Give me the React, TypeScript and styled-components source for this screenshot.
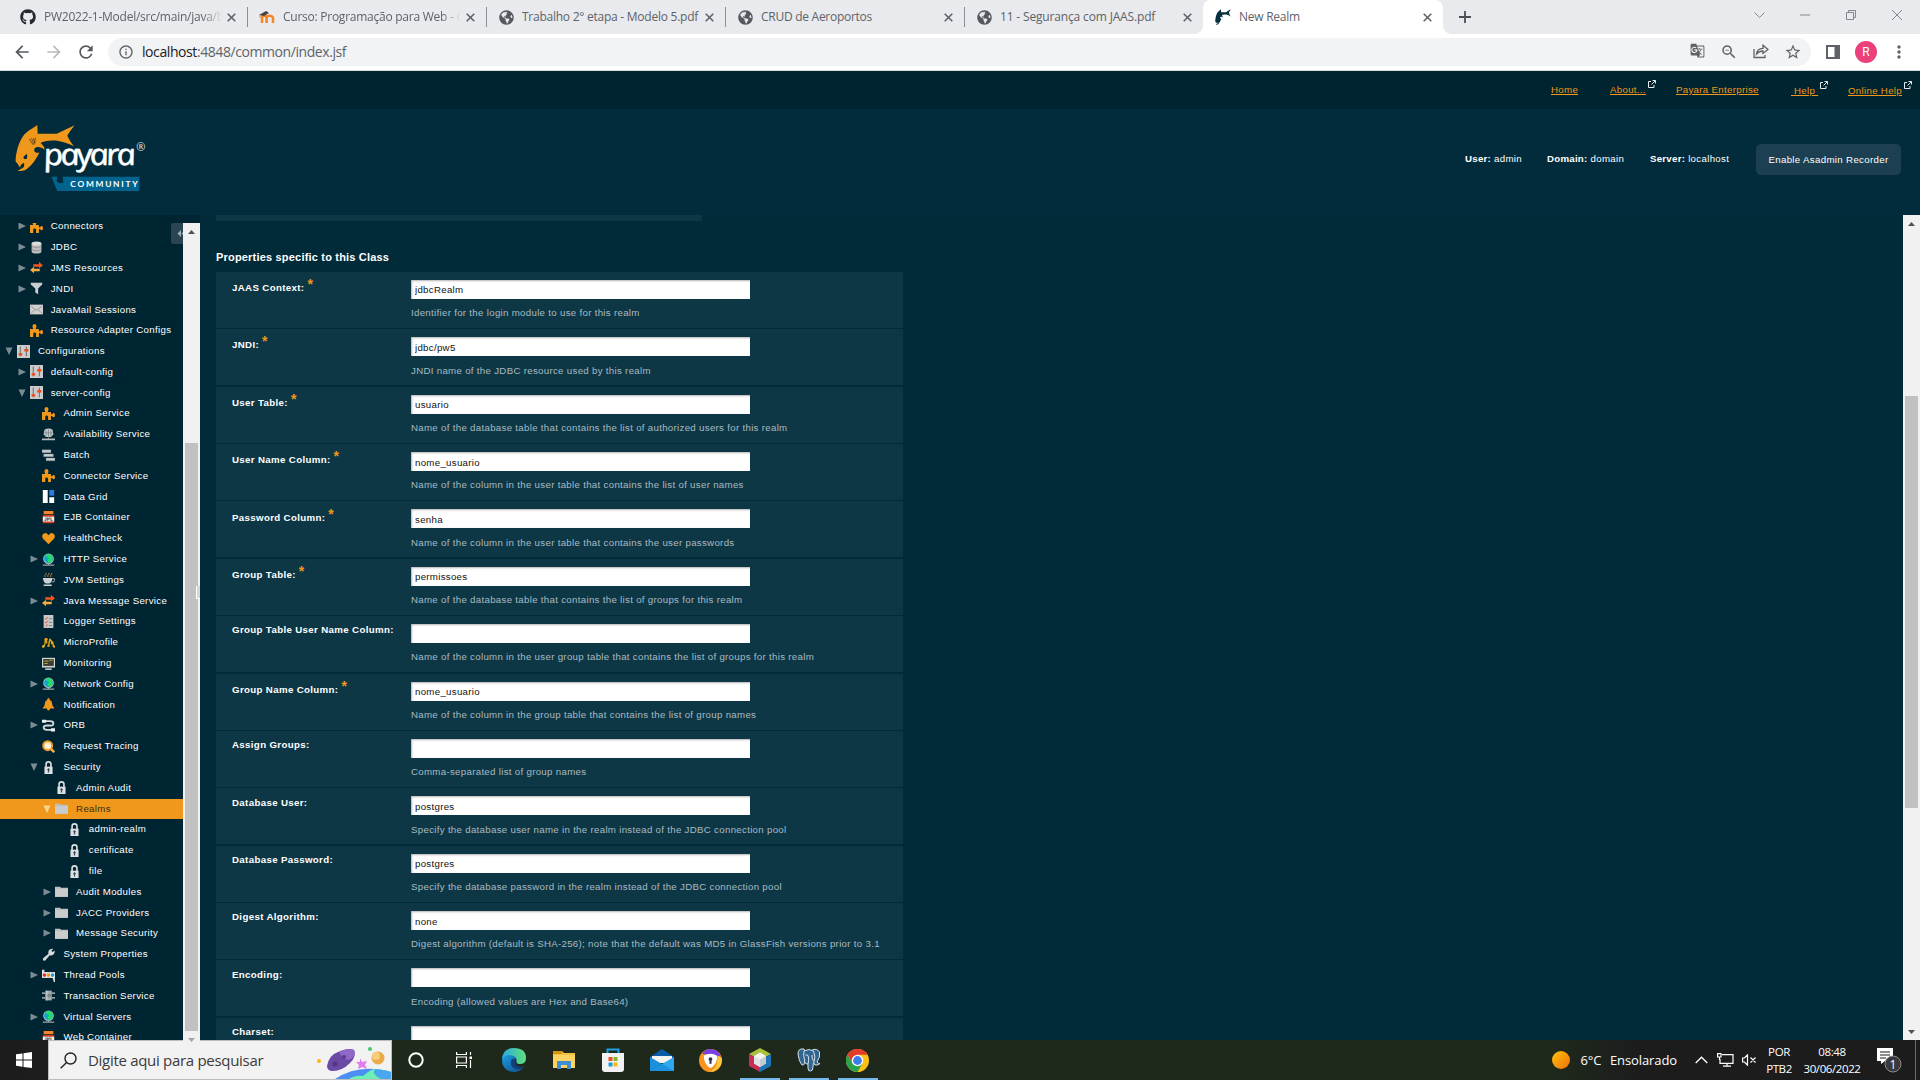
import React from "react";
import styled, { createGlobalStyle, css } from "styled-components";
import { FaGithub, FaGlobeAmericas } from "react-icons/fa";
import {
  MdArrowBack, MdArrowForward, MdRefresh, MdInfoOutline, MdGTranslate, MdStarBorder, MdMoreVert, MdOutlineZoomOut,
} from "react-icons/md";

const GlobalStyle = createGlobalStyle`
  * { box-sizing: border-box; }
  html, body { margin: 0; padding: 0; background: #022b3a; overflow: hidden; }
  svg { display: block; flex: none; }
`;

const UI = `"Open Sans", "Noto Sans", sans-serif`;
const PAGE = `"Liberation Sans", Arial, sans-serif`;

const Screen = styled.div`
  width: 1920px;
  height: 1080px;
  display: flex;
  flex-direction: column;
  overflow: hidden;
`;

/* ---------- browser chrome ---------- */
const TabStrip = styled.div`
  flex: none;
  height: 34px;
  background: #e8eaed;
  display: flex;
  padding-left: 8px;
  font: 12px/34px ${UI};
  color: #5f6368;
`;
const Tab = styled.div<{ $active?: boolean; $line?: boolean; $tight: number }>`
  position: relative;
  width: ${(p) => (p.$active ? 240 : 239)}px;
  height: 34px;
  padding: 0 9px 0 12px;
  display: flex;
  align-items: center;
  letter-spacing: ${(p) => p.$tight}px;
  ${(p) => p.$line && css`
    &::after { content: ""; position: absolute; right: -1px; top: 7px; width: 1px; height: 20px; background: #8b8e93; }
  `}
  ${(p) => p.$active && css`
    background: #fff;
    border-radius: 8px 8px 0 0;
    &::before, &::after { content: ""; position: absolute; bottom: 0; width: 8px; height: 8px; }
    &::before { left: -8px; background: radial-gradient(circle at 0 0, #e8eaed 7.5px, #fff 8px); }
    &::after { right: -8px; background: radial-gradient(circle at 100% 0, #e8eaed 7.5px, #fff 8px); }
  `}
`;
const TabIcon = styled.span`
  width: 16px;
  display: grid;
  place-items: center;
`;
const TabTitle = styled.span<{ $fade?: boolean }>`
  flex: 1;
  margin-left: 8px;
  overflow: hidden;
  white-space: nowrap;
  ${(p) => p.$fade && css`mask-image: linear-gradient(90deg, #000 158px, transparent 178px);`}
`;
const TabClose = styled.span`
  width: 14px;
  height: 14px;
  display: grid;
  place-items: center;
  margin-left: 1px;
`;
const NewTab = styled.div`
  width: 44px;
  display: grid;
  place-items: center;
`;
const WindowButtons = styled.div`
  margin-left: auto;
  display: grid;
  grid-template-columns: repeat(4, 46px);
  height: 29px;
  align-items: center;
  justify-items: center;
`;
const Toolbar = styled.div`
  flex: none;
  height: 37px;
  background: #fff;
  border-bottom: 1px solid #d5dbdc;
  display: flex;
  align-items: center;
  padding: 0 10px 0 12px;
  color: #5f6368;
`;
const NavButton = styled.span<{ $dim?: boolean; $gap?: number }>`
  color: ${(p) => (p.$dim ? "#b9bbbe" : "#55595d")};
  margin-right: ${(p) => p.$gap ?? 12}px;
`;
const Omnibox = styled.div`
  flex: 1;
  height: 28px;
  border-radius: 14px;
  background: #f1f3f4;
  display: flex;
  align-items: center;
  padding: 0 9px 0 10px;
  font: 14px/28px ${UI};
  letter-spacing: -0.42px;
  color: #5f6368;
`;
const Url = styled.span`
  flex: 1;
  margin-left: 8px;
  b { font-weight: 400; color: #202124; }
`;
const BoxIcons = styled.div`
  display: grid;
  grid-template-columns: repeat(4, 32px);
  justify-items: center;
  margin-right: -7px;
`;
const ToolIcons = styled.div`
  display: grid;
  grid-template-columns: 44px 22px 44px;
  justify-items: center;
  align-items: center;
  margin-right: -11px;
`;
const Avatar = styled.span`
  width: 22px;
  height: 22px;
  border-radius: 50%;
  background: #ec407a;
  color: #fff;
  font: 12px/22px Roboto, ${UI};
  text-align: center;
`;

/* ---------- admin console header ---------- */
const LinkBar = styled.div`
  flex: none;
  height: 38px;
  background: #002430;
  display: grid;
  grid-template-columns: 59px 66px 115px 57px 72px;
  justify-content: end;
  align-items: center;
  font: 9.7px/12px ${PAGE};
`;
const TopLink = styled.div<{ $low?: boolean }>`
  display: flex;
  align-items: center;
  gap: 2px;
  margin-top: ${(p) => (p.$low ? 2 : 0)}px;
  white-space: pre;
  color: #f0981b;
  letter-spacing: 0.31px;
  span { text-decoration: underline; }
  svg { margin-bottom: 12px; }
`;
const Masthead = styled.header`
  flex: none;
  height: 106px;
  background: #022c3c;
  display: grid;
  grid-template-columns: 1465px 82px 103px 106px 145px;
  align-items: center;
  font: 9.7px/12px ${PAGE};
  letter-spacing: 0.31px;
  color: #fff;
  svg { margin-top: -4px; }
`;
const Info = styled.div`
  margin-top: -6px;
  white-space: nowrap;
  b { letter-spacing: 0.25px; }
`;
const RecorderButton = styled.button`
  height: 31px;
  margin-top: -5px;
  padding: 0;
  border: 0;
  border-radius: 5px;
  background: #1c4051;
  color: #fff;
  font: 9.7px/12px ${PAGE};
  letter-spacing: 0.33px;
`;

/* ---------- body: tree and form ---------- */
const Body = styled.div`
  flex: none;
  height: 825px;
  display: flex;
  background: #022b3a;
`;
const Sidebar = styled.nav`
  width: 200px;
  padding-top: 8px;
  background: #002532;
  display: grid;
  grid-template-columns: 183px 17px;
  position: relative;
`;
const Tree = styled.div`
  height: 817px;
  overflow: hidden;
  font: 9.7px/19px ${PAGE};
  letter-spacing: 0.315px;
  color: #fff;
`;
const TreeBody = styled.div`
  margin-top: -6.7px;
`;
const TreeRow = styled.div<{ $depth: number; $selected?: boolean }>`
  height: 20.8px;
  padding-left: ${(p) => 5 + p.$depth * 12.7}px;
  display: flex;
  align-items: flex-start;
  white-space: nowrap;
  color: ${(p) => (p.$selected ? "#3b2f14" : "#fff")};
  background: ${(p) => (p.$selected ? "linear-gradient(#f0981b 20px, transparent 20px)" : "none")};
`;
const Twisty = styled.span<{ $selected?: boolean }>`
  width: 8px;
  height: 20px;
  margin-right: 4px;
  display: grid;
  align-items: center;
  color: ${(p) => (p.$selected ? "#fbd58c" : "#7b8b92")};
`;
const IconCell = styled.span`
  width: 13px;
  height: 20px;
  margin-right: 8px;
  display: grid;
  place-items: center;
`;
const Collapse = styled.div`
  position: absolute;
  left: 171px;
  top: 8px;
  width: 12px;
  height: 21px;
  overflow: hidden;
  border-radius: 2px 0 0 2px;
  background: #2a4551;
  display: grid;
  align-items: center;
  padding-left: 6px;
`;
const Splitter = styled.div`
  position: absolute;
  left: 196px;
  top: 371px;
  width: 4px;
  height: 13px;
  background: #d8d8d8;
  border-left: 1px solid #fff;
  border-bottom: 1px solid #fff;
`;
const ScrollTrack = styled.div<{ $before: number; $thumb: number }>`
  width: 17px;
  background: #f1f1f1;
  display: grid;
  grid-template-rows: 17px ${(p) => p.$before}px ${(p) => p.$thumb}px 1fr 17px;
  justify-items: center;
  align-items: center;
  i { grid-row: 3; width: 13px; height: 100%; background: #c1c1c1; }
  svg:last-child { grid-row: 5; }
`;
const Main = styled.main`
  flex: 1;
  height: 825px;
  overflow: hidden;
  padding-left: 16px;
  font-family: ${PAGE};
`;
const TopStrip = styled.div`
  width: 486px;
  height: 6px;
  background: #0e3746;
`;
const SectionTitle = styled.h2`
  height: 51px;
  margin: 0;
  padding-top: 29px;
  font: bold 11px/14px ${PAGE};
  letter-spacing: 0.19px;
  color: #fff;
`;
const FormTable = styled.div`
  width: 687px;
  margin-top: -0.05px;
  display: grid;
  grid-auto-rows: 56px;
  row-gap: 1.38px;
`;
const FormRow = styled.div`
  background: #0e3746;
  display: grid;
  grid-template-columns: 179px 339px;
  padding: 8px 0 0 16px;
`;
const Label = styled.label<{ $required?: boolean }>`
  padding-top: ${(p) => (p.$required ? 2.1 : 0.2)}px;
  font: bold 9.7px/12px ${PAGE};
  letter-spacing: 0.35px;
  color: #fff;
  display: flex;
  white-space: nowrap;
`;
const Star = styled.span`
  margin: -5px 0 0 3px;
  font: bold 14px/14px ${PAGE};
  color: #f0981b;
`;
const Field = styled.div`
  white-space: nowrap;
`;
const TextInput = styled.input`
  display: block;
  width: 339px;
  height: 19px;
  padding: 1px 4px 0;
  border: 0;
  background: #fff;
  box-shadow: inset 1px 1px 2px rgba(0, 0, 0, 0.3);
  font: 9.7px/14px ${PAGE};
  letter-spacing: 0.29px;
  color: #111;
`;
const Help = styled.div`
  margin-top: 8.2px;
  font: 9.7px/12px ${PAGE};
  letter-spacing: 0.302px;
  color: #a9bac1;
`;

/* ---------- taskbar ---------- */
const Taskbar = styled.div`
  flex: none;
  height: 40px;
  display: flex;
  background: linear-gradient(90deg, #1c1c1c 0, #1e281b 392px, #1e281b 1560px, #1c1c1d 1640px);
  color: #fff;
  font-family: ${UI};
`;
const StartButton = styled.div`
  width: 48px;
  display: grid;
  place-items: center;
`;
const SearchBox = styled.div`
  width: 344px;
  height: 40px;
  border: 1px solid #bdbdbd;
  background: #f2f2f2;
  display: flex;
  align-items: center;
  padding-left: 11px;
  color: #3a3a3a;
  font: 15px/36px ${UI};
  letter-spacing: -0.3px;
  span { flex: 1; margin-left: 11px; white-space: nowrap; }
`;
const AppButtons = styled.div`
  display: grid;
  grid-template-columns: 48px 48px 52px 48px repeat(6, 49px);
`;
const AppButton = styled.div<{ $open?: boolean }>`
  height: 40px;
  display: grid;
  place-items: center;
  background: ${(p) => (p.$open ? "linear-gradient(#76b9ed, #76b9ed) 50% 100% / 40px 2px no-repeat" : "none")};
`;
const Tray = styled.div`
  margin-left: auto;
  display: grid;
  grid-template-columns: 18px 29.5px 90px 24px 24px 24px 36px 70px 48px 5px;
  align-items: center;
  justify-items: center;
`;
const Weather = styled.span`
  justify-self: start;
  padding-left: 11px;
  font: 13px/16px ${UI};
  letter-spacing: -0.1px;
  white-space: nowrap;
`;
const Stacked = styled.span`
  margin-top: -1px;
  font: 11.5px/17px ${UI};
  letter-spacing: -0.4px;
  text-align: center;
  white-space: nowrap;
`;
const Notifications = styled.span`
  margin-right: 3px;
`;
const ShowDesktop = styled.span`
  height: 40px;
  width: 5px;
  border-left: 1px solid #6d6d6d;
`;

/* ---------- drawings ---------- */
const FISH = "M47 132C48 115 54 85 70 62C84 46 99 40 112 30L113 56L170 56C190 48 208 38 224 31C214 44 206 54 202 62C206 72 214 84 222 94C208 86 190 80 172 77C148 75 128 80 122 84C130 92 133 96 134 104C122 94 108 94 103 102C101 112 110 115 118 113C108 132 96 152 75 166C65 168 58 168 53 167C60 164 66 160 71 157C73 152 73 146 72 143L63 149L60 157C56 154 54 144 47 140Z";

const Logo = () => (
  <svg width="160" height="90" viewBox="0 0 480 270">
    <path d={FISH} fill="#f0981b" />
    <path d="M80 116L70 126L72 132L80 132L82 124Z" fill="#022c3c" />
    <path d="M88 72L100 90M94 70L103 88M100 70L105 84M106 68L104 86" stroke="#6d4f21" strokeWidth="3" />
    <g transform="translate(136 149) skewX(12) scale(1.14 1)">
      <text fill="#fff" stroke="#fff" strokeWidth="1.5" fontFamily="Open Sans, sans-serif" fontStyle="italic" fontSize="90" textLength="243">payara</text>
    </g>
    <text x="409" y="107" fill="#dfe6e9" fontFamily="Open Sans, sans-serif" fontSize="33">®</text>
    <path d="M154 185H172L170 199L178 205L190 203L188 185H418V228H172Z" fill="#02638f" />
    <text x="211" y="215" fill="#fff" fontFamily="Lato, sans-serif" fontWeight="700" fontSize="25" textLength="202">COMMUNITY</text>
  </svg>
);
const FishFavicon = () => (
  <svg width="16" height="16" viewBox="44 28 182 142" preserveAspectRatio="none"><path d={FISH} fill="#06303f" /></svg>
);
const Moodle = () => (
  <svg width="16" height="16" viewBox="0 0 16 16">
    <path d="M3 14V9q0-2.2 2.2-2.2T7.5 9v5M7.700 14V9q0-2.200 2.800-2.200T14 9v5" fill="none" stroke="#f7862b" strokeWidth="2.500" />
    <path d="M0 6L7 2L10 4L5 7Z" fill="#444" /><path d="M1 6V9" stroke="#f7862b" />
  </svg>
);
const Cross = () => (
  <svg width="9" height="9" viewBox="0 0 9 9"><path d="M.7.7L8.300 8.300M8.300.7L.7 8.300" stroke="#5f6368" strokeWidth="1.600" /></svg>
);
const External = () => (
  <svg width="8" height="8" viewBox="0 0 8 8" fill="none" stroke="#e6ecee" strokeWidth="1">
    <path d="M3 1.500H.500V7.500H6V5M4.500.500H7.500V3.500M7.300.700L3.500 4.500" />
  </svg>
);
const Triangle = ({ down, color = "#505050" }: { down?: boolean; color?: string }) => (
  <svg width="7" height="4" viewBox="0 0 7 4"><path d={down ? "M0 0H7L3.500 4Z" : "M0 4H7L3.500 0Z"} fill={color} /></svg>
);
const TwistyMark = ({ open }: { open: boolean }) => (
  <svg width="8" height="8" viewBox="0 0 8 8"><path d={open ? "M.5.5H7.500L4 8Z" : "M.5.5L8 4L.5 7.500Z"} fill="currentColor" /></svg>
);

type Kind = "puzzle" | "db" | "arrows" | "funnel" | "mail" | "config" | "cluster" | "batch" | "grid" | "jar" | "heart" | "globe"
  | "cup" | "list" | "micro" | "monitor" | "bell" | "orb" | "lens" | "lock" | "folder" | "wrench" | "pool" | "tx";

const SHAPES: Record<Kind, React.ReactNode> = {
  puzzle: <path d="M0 6H4Q3 4 3 2.500Q3.500 0 5.500 0T8 2.500Q8 4 7 6H11V9H12.500Q13 7.500 14.500 7.500T16 10T14.500 12.500Q13 12.500 12.500 11H11V16H7.500V12Q7 10.500 5.500 10.500T4 12V16H0Z" fill="#f0981b" />,
  db: <><path d="M2 3V13Q2 15.500 8 15.500T14 13V3Z" fill="#bdbdbd" /><ellipse cx="8" cy="3" rx="6" ry="2.500" fill="#dcdcdc" /><path d="M2 6Q3 8 8 8T14 6M2 10Q3 12 8 12T14 10" fill="none" stroke="#8f8f8f" /></>,
  arrows: <><path d="M4 4H11V1L16 5.500L11 9V7H4Z" fill="#f2561d" /><path d="M12 9.500H5V7L0 11L5 15V12.500H12Z" fill="#f5ab3d" /></>,
  funnel: <path d="M1 1H15V3L10 8V15L6.500 13V8L1 3Z" fill="#c9cdd0" />,
  mail: <><path d="M0 2H16V14H0Z" fill="#cfcfcf" /><path d="M1 4L8 9L15 4M1 13L6 8M15 13L10 8" fill="none" stroke="#8c8c8c" /></>,
  config: <><path d="M0 0H16V16H0Z" fill="#cbcbcb" /><path d="M4 2V14M11.500 2V14" stroke="#555" /><path d="M2 10H6.500V13H2ZM9 5H14V8H9Z" fill="#f04a17" /></>,
  cluster: <><path d="M3 2Q8-1 13 2L14 8L11 11H5L2 8Z" fill="#c4c8ca" /><path d="M5 3V10M8 2V14M11 3V10M3 6H13" stroke="#7d868b" /><path d="M0 14H6M10 14H16M6 14H10" stroke="#b5babd" strokeWidth="2" /></>,
  batch: <path d="M0 1H11V4.500H0ZM2 6H14V9.500H2ZM5 11H16V14.500H5Z" fill="#c9cdcf" stroke="#6f787c" strokeWidth=".4" />,
  grid: <><path d="M1 0H7V16H1ZM9 9H15V16H9Z" fill="#fff" /><path d="M9 0H15V7H9Z" fill="#2c7be5" /></>,
  jar: <><path d="M2 0H14V4H2Z" fill="#f5832a" /><path d="M1 5H15V15H1Z" fill="#d93a1b" /><path d="M1 7H15V13H1Z" fill="#eee" /><path d="M3 11.500H5V8M7 8V12M7 10H9V8M11 8V12H13" fill="none" stroke="#333" /></>,
  heart: <path d="M8 15L1 8Q-1 4 2 2T8 4Q11 0 14 2T15 8Z" fill="#f0981b" />,
  globe: <><circle cx="8" cy="7" r="6.500" fill="#b7c5ca" /><circle cx="8" cy="7" r="5.500" fill="#16a5c9" /><path d="M5 2Q9 0 12 4Q14.500 8 11 11L8 12L7 9L9 6L6 5Z" fill="#1fe25b" /><path d="M1 15H15M8 13V15" stroke="#9aa5aa" strokeWidth="1.600" /></>,
  cup: <><path d="M4 5Q2.500 3.500 4.500 2T4 0M7.500 5Q6 3.500 8 2T7.500 0M11 5Q9.500 3.500 11.500 2T11 0" fill="none" stroke="#c6813a" strokeWidth="1.200" /><path d="M1 6H13Q12 12 9 13H5Q2 12 1 6ZM2 14H12V16H2Z" fill="#cdd1d3" /><path d="M13 7Q16 6 15.500 9T12 11" fill="none" stroke="#cdd1d3" /></>,
  list: <><path d="M2 0H14V16H2Z" fill="#c9c9c9" /><path d="M4 4L5 5.500L7 2.500M4 8.500L5 10L7 7M4 13L5 14L7 11.500" fill="none" stroke="#e24a24" /><path d="M8.500 4.500H12.500M8.500 9H12.500M8.500 13H12.500" stroke="#777" /></>,
  micro: <><path d="M1 13Q4 13 4 5Q5 3 6 9M8 13Q9 5 10 4Q12 6 12 10Q13 3 14 13" fill="none" stroke="#e2a516" strokeWidth="1.800" /><circle cx="1.500" cy="13" r="1.500" fill="#f0c21b" /><circle cx="5" cy="4" r="2" fill="#f0981b" /><circle cx="8" cy="12" r="1.500" fill="#c99414" /><circle cx="15" cy="13" r="1.500" fill="#f0981b" /></>,
  monitor: <><path d="M0 1H16V13H0Z" fill="#d3d3d3" /><path d="M1.500 2.500H14.500V11H1.500Z" fill="#3b3d33" /><path d="M3 5H8M9 4H13M3 8H7" stroke="#d1c53b" /><path d="M4 15H12" stroke="#c0c0c0" strokeWidth="2" /></>,
  bell: <path d="M8 0Q9.500 0 9.500 2Q12.500 3 12.500 7Q12.500 10 15 12V13H10Q10 15.500 8 15.500T6 13H1V12Q3.500 10 3.500 7Q3.500 3 6.500 2Q6.500 0 8 0Z" fill="#f0981b" />,
  orb: <><path d="M1 2.500H10Q14 2.500 14 5.500T10 8H6Q2 8 2 10.500T6 13.500H15" fill="none" stroke="#d5dadc" strokeWidth="2.200" /><path d="M0 1H5V4.500H0ZM11 11.500H16V15.500H11Z" fill="#eee" /></>,
  lens: <><circle cx="7" cy="7" r="5.500" fill="#fff2d8" stroke="#f0981b" strokeWidth="2.500" /><path d="M11 11L15 15" stroke="#f5b050" strokeWidth="3" /></>,
  lock: <><path d="M5 8V4Q5 1 8 1T11 4V8" fill="none" stroke="#dde0e2" strokeWidth="2" /><path d="M3 7H13V16H3Z" fill="#dde0e2" /><path d="M8 9V14M6.500 10.500H9.500" stroke="#3b4a50" strokeWidth="1.500" /></>,
  folder: <><path d="M0 2H6L7.500 3.500H16V14.500H0Z" fill="#bcbfc0" /><path d="M0 5H16V14.500H0Z" fill="#cacccc" /></>,
  wrench: <path d="M1 13L8 7Q7 3 10 1.500Q12 .5 14 1L11.500 3.500L13 5L15.500 3Q16 6 14 8T9.500 9L4 15.500Q1 16.500 1 13Z" fill="#d6dadb" />,
  pool: <><path d="M0 1H3V4H16V11H13V8H0Z" fill="#d8dcdd" /><path d="M0 4H16V11H0Z" fill="#e6e8e8" /><path d="M13 11H16V16H14.500Z" fill="#d8dcdd" /><circle cx="3" cy="7.500" r="2.200" fill="#e8321d" /><circle cx="8" cy="7.500" r="2.200" fill="#f0981b" /><circle cx="13" cy="7.500" r="2.200" fill="#1f9edb" /></>,
  tx: <><path d="M4 2H12V14H4Z" fill="#a6acae" /><path d="M0 5H4M0 11H4M12 5H16M12 11H16M6 2V14" stroke="#c6cbcd" strokeWidth="1.500" /><circle cx="9" cy="8" r="2.500" fill="#80888b" /></>,
};
const TreeIcon = ({ kind }: { kind: Kind }) => <svg width="13" height="13" viewBox="0 0 16 16">{SHAPES[kind]}</svg>;

/* depth, expander (">" closed, "v" open, "" leaf), icon, label */
const NODES: [number, string, Kind, string][] = [
  [1, ">", "puzzle", "Connectors"], [1, ">", "db", "JDBC"], [1, ">", "arrows", "JMS Resources"], [1, ">", "funnel", "JNDI"],
  [1, "", "mail", "JavaMail Sessions"], [1, "", "puzzle", "Resource Adapter Configs"], [0, "v", "config", "Configurations"],
  [1, ">", "config", "default-config"], [1, "v", "config", "server-config"], [2, "", "puzzle", "Admin Service"],
  [2, "", "cluster", "Availability Service"], [2, "", "batch", "Batch"], [2, "", "puzzle", "Connector Service"],
  [2, "", "grid", "Data Grid"], [2, "", "jar", "EJB Container"], [2, "", "heart", "HealthCheck"], [2, ">", "globe", "HTTP Service"],
  [2, "", "cup", "JVM Settings"], [2, ">", "arrows", "Java Message Service"], [2, "", "list", "Logger Settings"],
  [2, "", "micro", "MicroProfile"], [2, "", "monitor", "Monitoring"], [2, ">", "globe", "Network Config"],
  [2, "", "bell", "Notification"], [2, ">", "orb", "ORB"], [2, "", "lens", "Request Tracing"], [2, "v", "lock", "Security"],
  [3, "", "lock", "Admin Audit"], [3, "v", "folder", "Realms"], [4, "", "lock", "admin-realm"], [4, "", "lock", "certificate"],
  [4, "", "lock", "file"], [3, ">", "folder", "Audit Modules"], [3, ">", "folder", "JACC Providers"],
  [3, ">", "folder", "Message Security"], [2, "", "wrench", "System Properties"], [2, ">", "pool", "Thread Pools"],
  [2, "", "tx", "Transaction Service"], [2, ">", "globe", "Virtual Servers"], [2, "", "jar", "Web Container"],
];

/* label, required, value, help */
const FIELDS: [string, boolean, string, string][] = [
  ["JAAS Context:", true, "jdbcRealm", "Identifier for the login module to use for this realm"],
  ["JNDI:", true, "jdbc/pw5", "JNDI name of the JDBC resource used by this realm"],
  ["User Table:", true, "usuario", "Name of the database table that contains the list of authorized users for this realm"],
  ["User Name Column:", true, "nome_usuario", "Name of the column in the user table that contains the list of user names"],
  ["Password Column:", true, "senha", "Name of the column in the user table that contains the user passwords"],
  ["Group Table:", true, "permissoes", "Name of the database table that contains the list of groups for this realm"],
  ["Group Table User Name Column:", false, "", "Name of the column in the user group table that contains the list of groups for this realm"],
  ["Group Name Column:", true, "nome_usuario", "Name of the column in the group table that contains the list of group names"],
  ["Assign Groups:", false, "", "Comma-separated list of group names"],
  ["Database User:", false, "postgres", "Specify the database user name in the realm instead of the JDBC connection pool"],
  ["Database Password:", false, "postgres", "Specify the database password in the realm instead of the JDBC connection pool"],
  ["Digest Algorithm:", false, "none", "Digest algorithm (default is SHA-256); note that the default was MD5 in GlassFish versions prior to 3.1"],
  ["Encoding:", false, "", "Encoding (allowed values are Hex and Base64)"],
  ["Charset:", false, "", ""],
];

const GlobeIcon = () => <FaGlobeAmericas size={15} color="#55595d" />;
const TABS: { icon: React.ReactNode; title: string; tight: number; fade?: boolean; line?: boolean; active?: boolean }[] = [
  { icon: <FaGithub size={16} color="#24292e" />, title: "PW2022-1-Model/src/main/java/b", tight: -0.25, fade: true, line: true },
  { icon: <Moodle />, title: "Curso: Programação para Web - G", tight: -0.25, fade: true, line: true },
  { icon: <GlobeIcon />, title: "Trabalho 2° etapa - Modelo 5.pdf", tight: -0.25, line: true },
  { icon: <GlobeIcon />, title: "CRUD de Aeroportos", tight: -0.27, line: true },
  { icon: <GlobeIcon />, title: "11 - Segurança com JAAS.pdf", tight: -0.16 },
  { icon: <FishFavicon />, title: "New Realm", tight: -0.25, active: true },
];

const SearchArt = () => (
  <svg width="76" height="38" viewBox="0 0 76 38">
    <circle cx="4" cy="20" r="2" fill="#fcb813" />
    <path d="M12 25Q14 14 23 11Q34 6 39 9Q42 15 35 22Q27 30 18 30Q12 30 12 25Z" fill="#6b4aa5" />
    <path d="M24 11Q34 6 39 9Q41 14 36 18Q29 21 24 11Z" fill="#8f68c8" />
    <circle cx="20" cy="23" r="2.500" fill="#513587" /><circle cx="29" cy="16" r="2" fill="#573a8f" />
    <path d="M45 17L47 21L52 20L50 24L52 28L47 26L43 28L44 24L41 21L45 21Z" fill="#e17cf0" />
    <circle cx="55" cy="8" r="2" fill="#46c96c" />
    <circle cx="63" cy="17" r="6.500" fill="#eaa94a" /><circle cx="61" cy="15" r="4" fill="#f6cc7d" />
    <path d="M20 38Q38 26 60 28Q70 29 76 31V38Z" fill="#4b8ff5" />
    <path d="M34 38Q40 34 48 35Q56 28 60 28Q70 29 76 31V38Z" fill="#6df0b4" /><path d="M60 28Q56 33 66 38H76V31Q70 29 60 28Z" fill="#48a7ee" />
  </svg>
);
const Edge = () => (
  <svg width="24" height="24" viewBox="0 0 24 24">
    <defs>
      <linearGradient id="edgeTop" x1="0" x2="1"><stop offset="0" stopColor="#2aa9e0" /><stop offset="1" stopColor="#5fe07a" /></linearGradient>
      <linearGradient id="edgeLow" x1="0" y1="0" x2="1" y2="1"><stop offset="0" stopColor="#1b9de2" /><stop offset="1" stopColor="#114a8b" /></linearGradient>
    </defs>
    <path d="M0 12Q0 0 12 0T24 10Q24 16 18 16Q14 16 14.500 13Q15 9 10 8Q3 8 0 12Z" fill="url(#edgeTop)" />
    <path d="M0 12Q2 7 8 7Q13 7.500 14 11Q9 10 9 15Q10 21 17 21Q20 21 22 19Q18 24 12 24Q0 23 0 12Z" fill="url(#edgeLow)" />
    <path d="M9 13Q8 20 16 21Q20 21 22.500 18Q20 19 17 18.500Q12 17 14 11Q10 10 9 13Z" fill="#123f7c" />
  </svg>
);
const Explorer = () => (
  <svg width="22" height="20" viewBox="0 0 22 20">
    <path d="M0 1H9L11 3H22V17H0Z" fill="#f5c142" /><path d="M0 1H9V4H0Z" fill="#d9940a" /><path d="M0 5H22V18H0Z" fill="#fcd462" />
    <path d="M4 11H18V19H14V15H8V19H4Z" fill="#3e8fd6" />
  </svg>
);
const Store = () => (
  <svg width="24" height="24" viewBox="0 0 24 24">
    <path d="M6.500 6V1.500H17.500V6" fill="none" stroke="#1fa1e8" strokeWidth="2" /><path d="M1 5H23V21Q23 24 20 24H4Q1 24 1 21Z" fill="#f2f2f2" />
    <path d="M7.500 9H11.500V13H7.500Z" fill="#f04e23" /><path d="M12.500 9H16.500V13H12.500Z" fill="#80b928" />
    <path d="M7.500 14.500H11.500V18.500H7.500Z" fill="#1c9ddd" /><path d="M12.500 14.500H16.500V18.500H12.500Z" fill="#fbb714" />
  </svg>
);
const Mail = () => (
  <svg width="24" height="22" viewBox="0 0 24 22">
    <path d="M0 8L12 0L24 8V12H0Z" fill="#0a5ca8" /><path d="M2 7H22V14H2Z" fill="#f3f3f3" />
    <path d="M0 8L12 15L0 22Z" fill="#1a8fdd" /><path d="M0 22L24 8V22Z" fill="#2ea8ee" /><path d="M12 15L0 22H24Z" fill="#1b93e0" />
  </svg>
);
const Privacy = () => (
  <svg width="23" height="23" viewBox="0 0 24 24">
    <circle cx="12" cy="12" r="12" fill="#f7941d" /><path d="M12 0A12 12 0 0 1 23 8L16 7L3 5Q7 0 12 0Z" fill="#7a3fe0" />
    <path d="M24 12Q23 22 12 24L18 18L20 7Q24 8 24 12Z" fill="#ffc93b" /><path d="M5 7Q12 3 19 7Q19 16 12 20Q5 16 5 7Z" fill="#fff" />
    <circle cx="12" cy="10.500" r="2" fill="#2d2f45" /><path d="M11.200 11H12.800L13.200 15.500H10.800Z" fill="#2d2f45" />
  </svg>
);
const NetBeans = () => (
  <svg width="22" height="24" viewBox="0 0 22 24">
    <path d="M11 0L22 6L11 12L0 6Z" fill="#a9c23c" /><path d="M0 6L11 12V24L0 18Z" fill="#c92f54" /><path d="M22 6L11 12V24L22 18Z" fill="#1f74b8" />
    <path d="M11 4.500L17 8V15.500L11 19L5 15.500V8Z" fill="#f4f4f4" /><path d="M11 11.500L17 8V15.500L11 19Z" fill="#c5ccd0" /><path d="M5 8L11 11.500V19L5 15.500Z" fill="#e1e4e6" />
  </svg>
);
const Postgres = () => (
  <svg width="24" height="24" viewBox="0 0 24 24" fill="#30658f" stroke="#d6e2ea" strokeWidth="1" strokeLinejoin="round">
    <path d="M7 1Q1 0 1 6Q2 14 5 17Q7 18 8 14L9 4Z" />
    <path d="M15 2Q20 0 22.500 4Q23.500 9 20 14Q21 15.500 23 15.500Q21 17.500 18 17L16 14Z" />
    <path d="M7 3Q12 0 16.500 3Q19 9 17 14Q16 15 16 19Q16 23 13.500 23Q11 23.500 11 20V16Q7 16 7.500 12Q6 7 7 3Z" />
    <path d="M11 16Q12 13 11.500 9Q11 6 8.500 7M16.500 13Q14.500 10 15 7" fill="none" />
  </svg>
);
const Chrome = () => (
  <svg width="23" height="23" viewBox="0 0 24 24">
    <circle cx="12" cy="12" r="12" fill="#fbc116" /><path d="M1.600 6A12 12 0 0 1 22.400 6H12L6.800 15Z" fill="#e33b2e" />
    <path d="M1.600 6A12 12 0 0 0 12 24L17.200 15L12 17L6.800 15Z" fill="#2ba24c" /><circle cx="12" cy="12" r="6" fill="#fff" /><circle cx="12" cy="12" r="4.600" fill="#3b7ded" />
  </svg>
);

export default function App() {
  return (
    <Screen>
      <GlobalStyle />
      <TabStrip>
        {TABS.map((t) => (
          <Tab key={t.title} $active={t.active} $line={t.line} $tight={t.tight}>
            <TabIcon>{t.icon}</TabIcon>
            <TabTitle $fade={t.fade}>{t.title}</TabTitle>
            <TabClose><Cross /></TabClose>
          </Tab>
        ))}
        <NewTab><svg width="12" height="12"><path d="M6 0V12M0 6H12" stroke="#4a4d51" strokeWidth="1.800" /></svg></NewTab>
        <WindowButtons>
          <svg width="11" height="6" fill="none" stroke="#84878b"><path d="M.5.5L5.500 5.500L10.500.500" /></svg>
          <svg width="10" height="2"><path d="M0 1H10" stroke="#84878b" /></svg>
          <svg width="10" height="10" fill="none" stroke="#84878b"><path d="M.5 2.500H7.500V9.500H.5ZM2.500 2.500V.500H9.500V7.500H7.500" /></svg>
          <svg width="10" height="10" fill="none" stroke="#84878b"><path d="M0 0L10 10M10 0L0 10" /></svg>
        </WindowButtons>
      </TabStrip>
      <Toolbar>
        <NavButton><MdArrowBack size={20} /></NavButton>
        <NavButton $dim><MdArrowForward size={20} /></NavButton>
        <NavButton $gap={12}><MdRefresh size={20} /></NavButton>
        <Omnibox>
          <MdInfoOutline size={16} />
          <Url><b>localhost</b>:4848/common/index.jsf</Url>
          <BoxIcons>
            <MdGTranslate size={15} />
            <MdOutlineZoomOut size={18} />
            <svg width="16" height="16" fill="none" stroke="#5f6368" strokeWidth="1.300"><path d="M1 6V14.500H12V12M3.500 11Q4 5.500 10 5.300V2.200L15 6.500L10 10.500V8Q6 8 3.500 11Z" /></svg>
            <MdStarBorder size={18} />
          </BoxIcons>
        </Omnibox>
        <ToolIcons>
          <svg width="14" height="14"><path d="M1 1H13V13H1Z" fill="#fff" stroke="#5f6368" strokeWidth="2" /><path d="M8.500 0H14V14H8.500Z" fill="#5f6368" /></svg>
          <Avatar>R</Avatar>
          <MdMoreVert size={20} />
        </ToolIcons>
      </Toolbar>

      <LinkBar>
        <TopLink><span>Home</span></TopLink>
        <TopLink><span>About...</span><External /></TopLink>
        <TopLink><span>Payara Enterprise</span></TopLink>
        <TopLink $low><span> Help </span><External /></TopLink>
        <TopLink $low><span>Online Help</span><External /></TopLink>
      </LinkBar>
      <Masthead>
        <Logo />
        <Info><b>User:</b> admin</Info>
        <Info><b>Domain:</b> domain</Info>
        <Info><b>Server:</b> localhost</Info>
        <RecorderButton>Enable Asadmin Recorder</RecorderButton>
      </Masthead>

      <Body>
        <Sidebar>
          <Tree>
            <TreeBody>
              {NODES.map(([depth, mark, kind, label]) => {
                const selected = label === "Realms";
                return (
                  <TreeRow key={label} $depth={depth} $selected={selected}>
                    <Twisty $selected={selected}>{mark && <TwistyMark open={mark === "v"} />}</Twisty>
                    <IconCell><TreeIcon kind={kind} /></IconCell>
                    {label}
                  </TreeRow>
                );
              })}
            </TreeBody>
          </Tree>
          <ScrollTrack $before={203} $thumb={588}><Triangle /><i /><Triangle down color="#a3a3a3" /></ScrollTrack>
          <Collapse><svg width="8" height="7"><path d="M4 0V7L.5 3.500ZM8 0V7L4.500 3.500Z" fill="#9fb0b7" /></svg></Collapse>
          <Splitter />
        </Sidebar>
        <Main>
          <TopStrip />
          <SectionTitle>Properties specific to this Class</SectionTitle>
          <FormTable>
            {FIELDS.map(([label, required, value, help]) => (
              <FormRow key={label}>
                <Label $required={required}>{label}{required && <Star>*</Star>}</Label>
                <Field>
                  <TextInput defaultValue={value} />
                  <Help>{help}</Help>
                </Field>
              </FormRow>
            ))}
          </FormTable>
        </Main>
        <ScrollTrack $before={164} $thumb={412}><Triangle /><i /><Triangle down /></ScrollTrack>
      </Body>

      <Taskbar>
        <StartButton>
          <svg width="16" height="16" fill="#fff"><path d="M0 2.300L6.500 1.400V7.600H0ZM7.500 1.200L16 0V7.600H7.500ZM0 8.500H6.500V14.700L0 13.800ZM7.500 8.500H16V16L7.500 14.900Z" /></svg>
        </StartButton>
        <SearchBox>
          <svg width="17" height="17" fill="none" stroke="#222" strokeWidth="1.400"><circle cx="10.500" cy="6.500" r="5.500" /><path d="M6.500 10.500L.7 16.300" /></svg>
          <span>Digite aqui para pesquisar</span>
          <SearchArt />
        </SearchBox>
        <AppButtons>
          <AppButton><svg width="16" height="16"><circle cx="8" cy="8" r="6.700" fill="none" stroke="#fff" strokeWidth="2" /></svg></AppButton>
          <AppButton>
            <svg width="17" height="16" fill="none" stroke="#fff" strokeWidth="1.200"><path d="M.6 0V2.500H10.400V0M.6 5H10.400V11H.6ZM.6 16V13.500H10.400V16M14.500 0V3M14.500 8V16" /><path d="M13.500 4.500H16V7H13.500Z" fill="#fff" stroke="none" /></svg>
          </AppButton>
          <AppButton><Edge /></AppButton>
          <AppButton><Explorer /></AppButton>
          <AppButton><Store /></AppButton>
          <AppButton><Mail /></AppButton>
          <AppButton><Privacy /></AppButton>
          <AppButton $open><NetBeans /></AppButton>
          <AppButton $open><Postgres /></AppButton>
          <AppButton $open><Chrome /></AppButton>
        </AppButtons>
        <Tray>
          <svg width="18" height="18"><defs><linearGradient id="sun" x1="0" y1="0" x2="1" y2="1"><stop offset="0" stopColor="#ffc40a" /><stop offset="1" stopColor="#ef6f0c" /></linearGradient></defs><circle cx="9" cy="9" r="9" fill="url(#sun)" /></svg>
          <Weather>6°C</Weather>
          <Weather>Ensolarado</Weather>
          <svg width="13" height="8" fill="none" stroke="#fff" strokeWidth="1.300"><path d="M.7 7L6.500 1.200L12.300 7" /></svg>
          <svg width="17" height="14" fill="none" stroke="#fff" strokeWidth="1.200"><path d="M5 1.600H16V10.400H3V6M10 10.400V13M6 13.200H14M.6.600H4V4H.6ZM2.500 4V7" /></svg>
          <svg width="15" height="12" fill="none" stroke="#fff" strokeWidth="1.200"><path d="M.6 4H2.500L5.500.800V11.200L2.500 8H.6ZM8.500 3.500L13.500 8.500M13.500 3.500L8.500 8.500" /></svg>
          <Stacked>POR<br />PTB2</Stacked>
          <Stacked>08:48<br />30/06/2022</Stacked>
          <Notifications>
            <svg width="26" height="26" viewBox="0 0 26 26">
              <path d="M0 1H16V14H8L4 17V14H0Z" fill="#fff" /><path d="M3 5H13M3 8H13M3 11H9" stroke="#1c1c1d" strokeWidth="1.200" />
              <circle cx="16" cy="17" r="8" fill="#3a3a3c" stroke="#8a8a8a" /><text x="16" y="21.500" fill="#fff" fontSize="12" textAnchor="middle" fontFamily="Open Sans, sans-serif">1</text>
            </svg>
          </Notifications>
          <ShowDesktop />
        </Tray>
      </Taskbar>
    </Screen>
  );
}
